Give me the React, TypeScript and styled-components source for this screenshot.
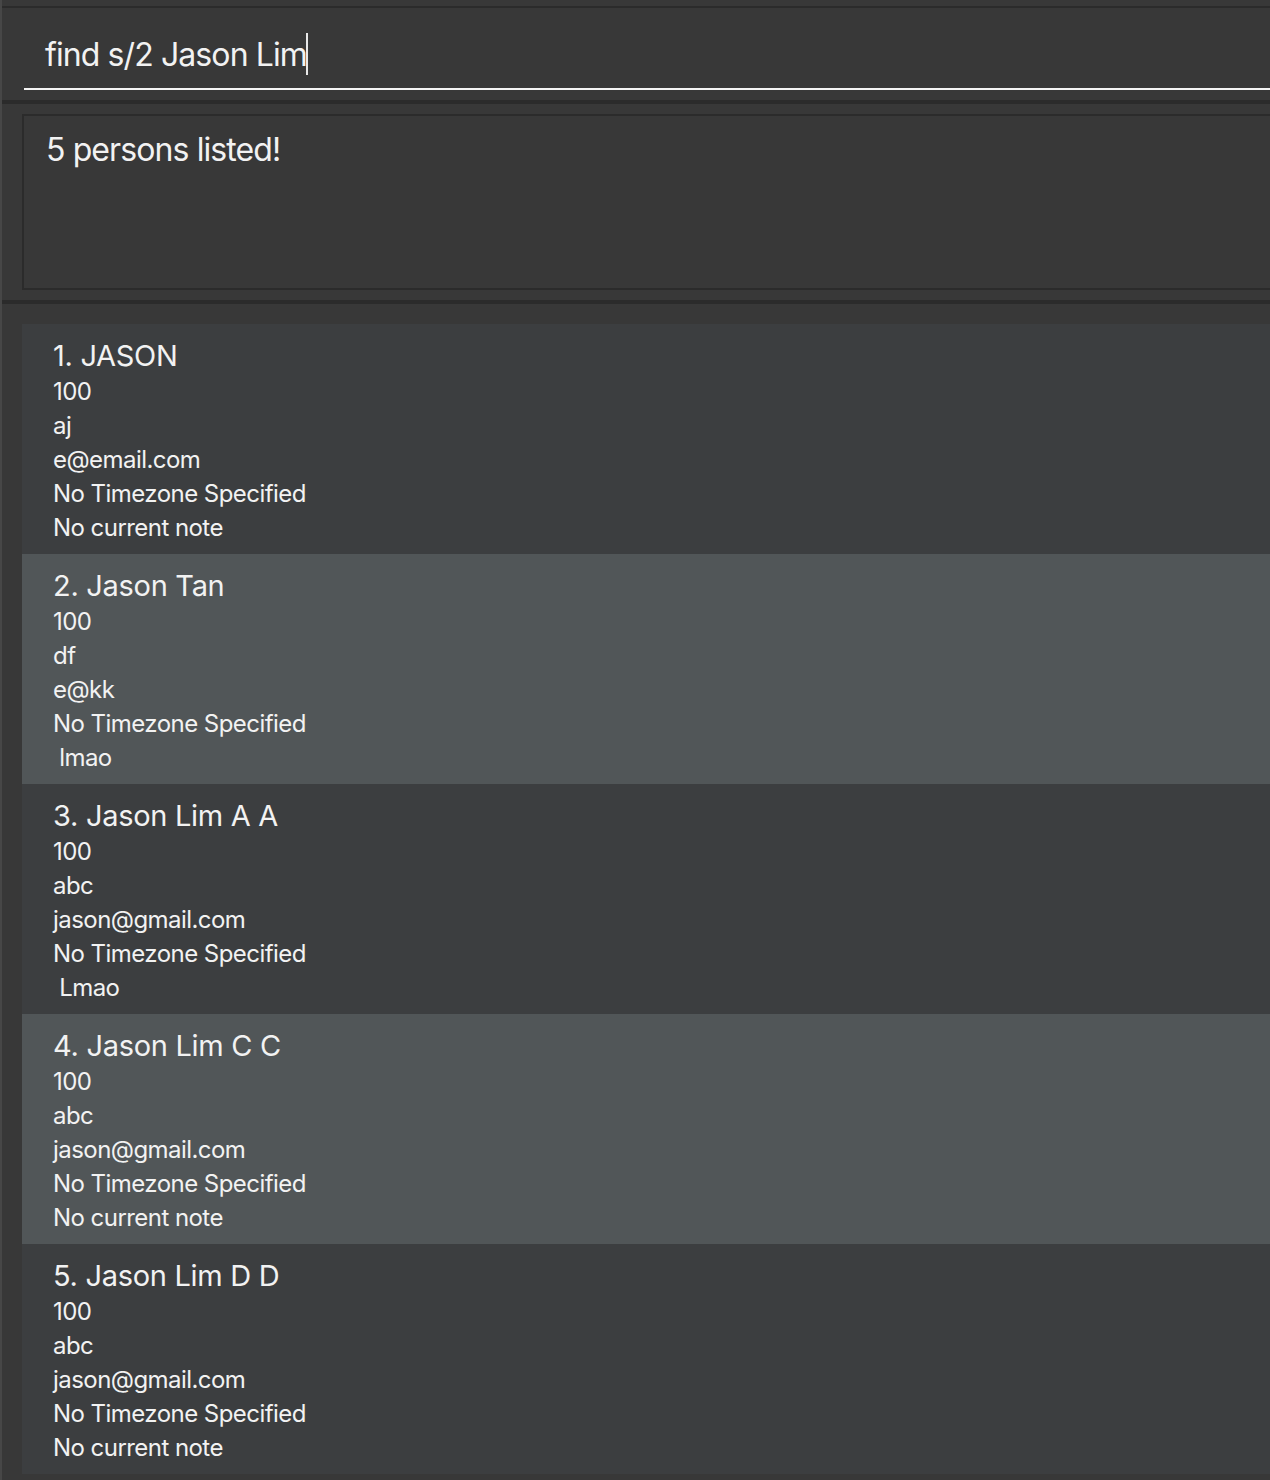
import styled, { createGlobalStyle } from "styled-components";

const GlobalStyle = createGlobalStyle`
    html, body {
        margin: 0;
        padding: 0;
        background: #383838;
    }

    * {
        box-sizing: border-box;
    }
`;

const Window = styled.div`
    min-height: 1480px;

    background: #383838;
    border-left: 2px solid #474747;

    font-family: Inter, "Noto Sans", sans-serif;
    color: #f2f2f2;
`;

const TopBar = styled.div`
    height: 8px;
    border-bottom: 2px solid #2b2b2b;
`;

const CommandPane = styled.div`
    height: 92px;
    padding: 0 0 10px 22px;

    display: flex;
    align-items: flex-end;
`;

const CommandField = styled.div`
    width: 100%;
    height: 74px;

    padding: 4px 0 0 21px;

    display: flex;
    align-items: center;

    border-bottom: 2px solid #f5f5f5;

    font-size: 32px;
    letter-spacing: -0.9px;
    white-space: pre;
`;

const Caret = styled.span`
    display: inline-block;
    width: 2px;
    height: 42px;

    margin-left: -1px;

    background: #e8e8e8;
`;

const Divider = styled.div`
    height: 4px;
    background: #2b2b2b;
`;

const ResultPane = styled.div`
    padding: 10px 0 10px 20px;
`;

const ResultBox = styled.div`
    height: 176px;

    padding: 14px 0 0 22px;

    border: 2px solid #2b2b2b;
    border-right: none;

    font-size: 32px;
    letter-spacing: -0.9px;
    line-height: 40px;
`;

const PersonList = styled.div`
    padding: 20px 0 6px 20px;
`;

const Card = styled.div<{ $alt: boolean }>`
    height: 230px;

    padding: 13px 0 0 31px;

    background: ${({ $alt }) => ($alt ? "#515658" : "#3c3e40")};
`;

const Name = styled.div`
    font-size: 29px;
    line-height: 38px;
    letter-spacing: -0.3px;
`;

const Field = styled.div`
    font-size: 24px;
    line-height: 34px;
    letter-spacing: -0.55px;
    white-space: pre;
`;

interface Person {
    name: string;
    phone: string;
    address: string;
    email: string;
    timezone: string;
    note: string;
}

const persons: Person[] = [
    {
        name: "JASON",
        phone: "100",
        address: "aj",
        email: "e@email.com",
        timezone: "No Timezone Specified",
        note: "No current note"
    },
    {
        name: "Jason Tan",
        phone: "100",
        address: "df",
        email: "e@kk",
        timezone: "No Timezone Specified",
        note: " lmao"
    },
    {
        name: "Jason Lim A A",
        phone: "100",
        address: "abc",
        email: "jason@gmail.com",
        timezone: "No Timezone Specified",
        note: " Lmao"
    },
    {
        name: "Jason Lim C C",
        phone: "100",
        address: "abc",
        email: "jason@gmail.com",
        timezone: "No Timezone Specified",
        note: "No current note"
    },
    {
        name: "Jason Lim D D",
        phone: "100",
        address: "abc",
        email: "jason@gmail.com",
        timezone: "No Timezone Specified",
        note: "No current note"
    }
];

export default function App() {
    return (
        <>
            <GlobalStyle />

            <Window>

                <TopBar />

                <CommandPane>
                    <CommandField>
                        find s/2 Jason Lim
                        <Caret />
                    </CommandField>
                </CommandPane>

                <Divider />

                <ResultPane>
                    <ResultBox>5 persons listed!</ResultBox>
                </ResultPane>

                <Divider />

                <PersonList>

                    {persons.map((person, index) => (

                        <Card key={index} $alt={index % 2 === 1}>

                            <Name>{index + 1}. {person.name}</Name>

                            <Field>{person.phone}</Field>
                            <Field>{person.address}</Field>
                            <Field>{person.email}</Field>
                            <Field>{person.timezone}</Field>
                            <Field>{person.note}</Field>

                        </Card>

                    ))}

                </PersonList>

            </Window>
        </>
    );
}
